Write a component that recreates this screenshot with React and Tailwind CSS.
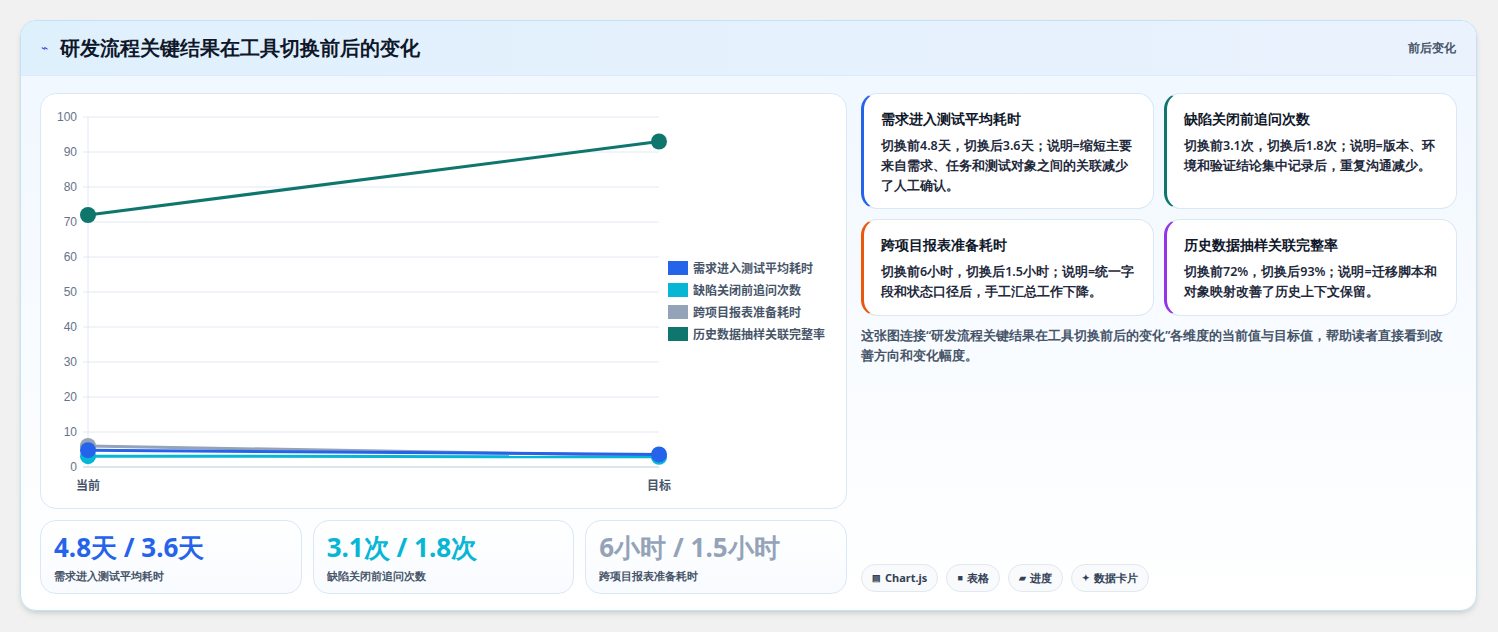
import React from "react";

const cn = "font-['Noto_Sans','Noto_Sans_CJK_SC',sans-serif]";

const series = [
  { name: "需求进入测试平均耗时", color: "#2563eb", a: 4.8, b: 3.6 },
  { name: "缺陷关闭前追问次数", color: "#06b6d4", a: 3.1, b: 2.9 },
  { name: "跨项目报表准备耗时", color: "#94a3b8", a: 6, b: 3.2 },
  { name: "历史数据抽样关联完整率", color: "#0f766e", a: 72, b: 93 },
];

const y = (v) => 373 - v * 3.5;

function Chart() {
  const ticks = [0, 10, 20, 30, 40, 50, 60, 70, 80, 90, 100];
  return (
    <svg width="807" height="415" className="block">
      {ticks.map((t) => (
        <g key={t}>
          <line x1="42" x2="618" y1={y(t)} y2={y(t)} stroke="#e2e8f0" />
          <text x="36" y={y(t) + 4} textAnchor="end" fontSize="12" fill="#64748b" fontFamily="Liberation Sans, sans-serif">{t}</text>
        </g>
      ))}
      <line x1="47" x2="47" y1="23" y2="373" stroke="#e2e8f0" />
      <line x1="42" x2="618" y1="373" y2="373" stroke="#cbd5e1" />
      <text x="47" y="396" textAnchor="middle" fontSize="12" fontWeight="600" fill="#475569" fontFamily="Noto Sans CJK SC, sans-serif">当前</text>
      <text x="618" y="396" textAnchor="middle" fontSize="12" fontWeight="600" fill="#475569" fontFamily="Noto Sans CJK SC, sans-serif">目标</text>
      {[2, 1, 0, 3].map((i) => {
        const s = series[i];
        return (
          <g key={i}>
            <line x1="47" x2="618" y1={y(s.a)} y2={y(s.b)} stroke={s.color} strokeWidth="3" />
            <circle cx="47" cy={y(s.a)} r="8" fill={s.color} />
            <circle cx="618" cy={y(s.b)} r="8" fill={s.color} />
          </g>
        );
      })}
      {series.map((s, i) => (
        <g key={s.name}>
          <rect x="627" y={167 + i * 22} width="20" height="14" fill={s.color} />
          <text x="652" y={179 + i * 22} fontSize="12" fontWeight="600" fill="#475569" fontFamily="Noto Sans CJK SC, sans-serif">{s.name}</text>
        </g>
      ))}
    </svg>
  );
}

function Stat({ value, label, color }) {
  return (
    <div className="flex-1 h-[74px] rounded-2xl border border-[#dbe7f5] bg-gradient-to-b from-white to-[#f8fbff] px-[13px] pt-[10px]">
      <div className={`text-[26px] font-bold leading-[32px] ${color}`}>{value}</div>
      <div className="text-[11px] font-semibold text-[#475569] mt-[5px]">{label}</div>
    </div>
  );
}

function Card({ title, body, border, h }) {
  return (
    <div className={`flex-1 ${h} rounded-2xl bg-white border border-[#dbe7f5] border-l-[3px] ${border} px-[17px] pt-[15px]`}>
      <div className="text-[14px] font-bold text-[#0f172a] leading-5">{title}</div>
      <div className="text-[12.5px] text-[#1e293b] leading-[20px] mt-[7px] font-semibold">{body}</div>
    </div>
  );
}

function Chip({ icon, label }) {
  return (
    <div className="h-[28px] px-[10px] rounded-full border border-[#e2e8f0] bg-[#f8fafc] flex items-center gap-1 text-[11px] font-bold text-[#334155]">
      <span className="text-[9px]">{icon}</span>{label}
    </div>
  );
}

export default function App() {
  return (
    <div className={`w-[1498px] h-[632px] bg-[#f1f1f1] pt-[20px] pl-[20px] ${cn}`}>
      <div className="w-[1457px] h-[591px] rounded-2xl border border-[#bfe3f7] bg-gradient-to-b from-[#f0f7ff] to-white overflow-hidden shadow-md">
        <div className="h-[55px] flex items-center justify-between px-[20px] bg-gradient-to-r from-[#dff0fd] to-[#eaf2fd] border-b border-[#dbeafe]">
          <div className="flex items-center gap-3">
            <span className="text-[#4f46e5] text-[12px]">⌁</span>
            <span className="text-[20px] font-bold text-[#0f172a]">研发流程关键结果在工具切换前后的变化</span>
          </div>
          <span className="text-[12px] font-bold text-[#475569]">前后变化</span>
        </div>
        <div className="flex gap-[14px] px-[19px] pt-[17px]">
          <div className="w-[807px] flex flex-col gap-[11px]">
            <div className="h-[416px] rounded-2xl border border-[#dbe7f5] bg-white overflow-hidden">
              <Chart />
            </div>
            <div className="flex gap-[11px]">
              <Stat value="4.8天 / 3.6天" label="需求进入测试平均耗时" color="text-[#2563eb]" />
              <Stat value="3.1次 / 1.8次" label="缺陷关闭前追问次数" color="text-[#06b6d4]" />
              <Stat value="6小时 / 1.5小时" label="跨项目报表准备耗时" color="text-[#94a3b8]" />
            </div>
          </div>
          <div className="flex-1 flex flex-col h-[500px]">
            <div className="flex gap-[10px]">
              <Card h="h-[116px]" border="border-l-[#2563eb]" title="需求进入测试平均耗时" body="切换前4.8天，切换后3.6天；说明=缩短主要来自需求、任务和测试对象之间的关联减少了人工确认。" />
              <Card h="h-[116px]" border="border-l-[#0f766e]" title="缺陷关闭前追问次数" body="切换前3.1次，切换后1.8次；说明=版本、环境和验证结论集中记录后，重复沟通减少。" />
            </div>
            <div className="flex gap-[10px] mt-[10px]">
              <Card h="h-[97px]" border="border-l-[#ea580c]" title="跨项目报表准备耗时" body="切换前6小时，切换后1.5小时；说明=统一字段和状态口径后，手工汇总工作下降。" />
              <Card h="h-[97px]" border="border-l-[#9333ea]" title="历史数据抽样关联完整率" body="切换前72%，切换后93%；说明=迁移脚本和对象映射改善了历史上下文保留。" />
            </div>
            <p className="text-[12.5px] text-[#475569] leading-[20px] mt-[10px] font-semibold pr-[8px]">这张图连接“研发流程关键结果在工具切换前后的变化”各维度的当前值与目标值，帮助读者直接看到改善方向和变化幅度。</p>
            <div className="mt-auto flex gap-2 pb-[1px]">
              <Chip icon="▤" label="Chart.js" />
              <Chip icon="■" label="表格" />
              <Chip icon="▰" label="进度" />
              <Chip icon="✦" label="数据卡片" />
            </div>
          </div>
        </div>
      </div>
    </div>
  );
}
